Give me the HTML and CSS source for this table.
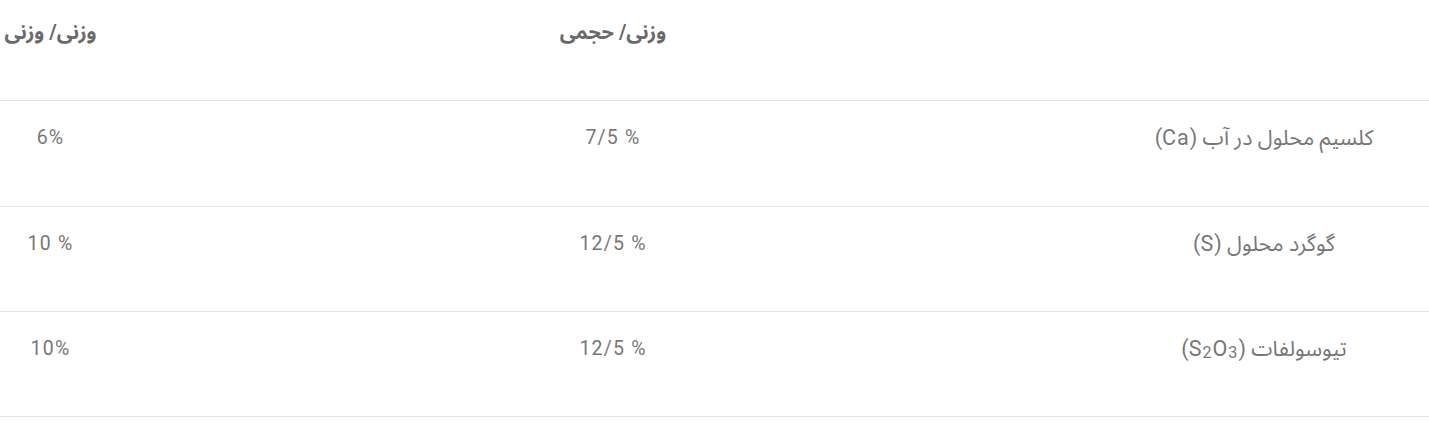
FILE: index.html
```html
<!DOCTYPE html>
<html lang="fa" dir="rtl">
<head>
<meta charset="utf-8">
<link rel="stylesheet" href="styles.css">
</head>
<body>
<div class="wrap">
<table class="spec">
  <colgroup>
    <col class="c-name">
    <col class="c-vol">
    <col class="c-wt">
  </colgroup>
  <thead>
    <tr>
      <th class="name"></th>
      <th>وزنی/ حجمی</th>
      <th>وزنی/ وزنی</th>
    </tr>
  </thead>
  <tbody>
    <tr>
      <td class="name">کلسیم محلول در آب (Ca)</td>
      <td class="num">7/5 %</td>
      <td class="num">6%</td>
    </tr>
    <tr>
      <td class="name">گوگرد محلول (S)</td>
      <td class="num">12/5 %</td>
      <td class="num">10 %</td>
    </tr>
    <tr>
      <td class="name">تیوسولفات (S<sub>2</sub>O<sub>3</sub>)</td>
      <td class="num">12/5 %</td>
      <td class="num">10%</td>
    </tr>
  </tbody>
</table>
</div>
</body>
</html>
```
FILE: styles.css
```css
html, body {
  margin: 0;
  padding: 0;
  background: #fff;
}
body {
  font-family: Roboto, "Noto Sans Arabic", "DejaVu Sans", sans-serif;
  color: #777;
  font-size: 19px;
}
.wrap {
  width: 1429px;
  overflow: hidden;
}
.spec {
  width: 1455px;
  border-collapse: collapse;
  table-layout: fixed;
}
.c-name { width: 330px; }
.c-vol { width: 972px; }
.c-wt { width: 153px; }
.spec th,
.spec td {
  text-align: center;
  vertical-align: top;
  padding: 0;
  line-height: 26px;
  white-space: nowrap;
  border-bottom: 1px solid #e4e4e4;
}
.spec th {
  height: 100px;
  box-sizing: border-box;
  padding-top: 19px;
  font-size: 20px;
  font-weight: bold;
  color: #6a6a6a;
}
.spec td {
  height: 105px;
  box-sizing: border-box;
  padding-top: 24px;
  letter-spacing: 1px;
}
.spec tbody tr:first-child td {
  height: 106px;
}
.spec td.name {
  font-size: 21.5px;
}
.spec .num {
  direction: ltr;
  font-size: 19.5px;
  letter-spacing: 1.2px;
}
.spec sub {
  font-size: 75%;
  vertical-align: -0.15em;
  line-height: 0;
}
```
